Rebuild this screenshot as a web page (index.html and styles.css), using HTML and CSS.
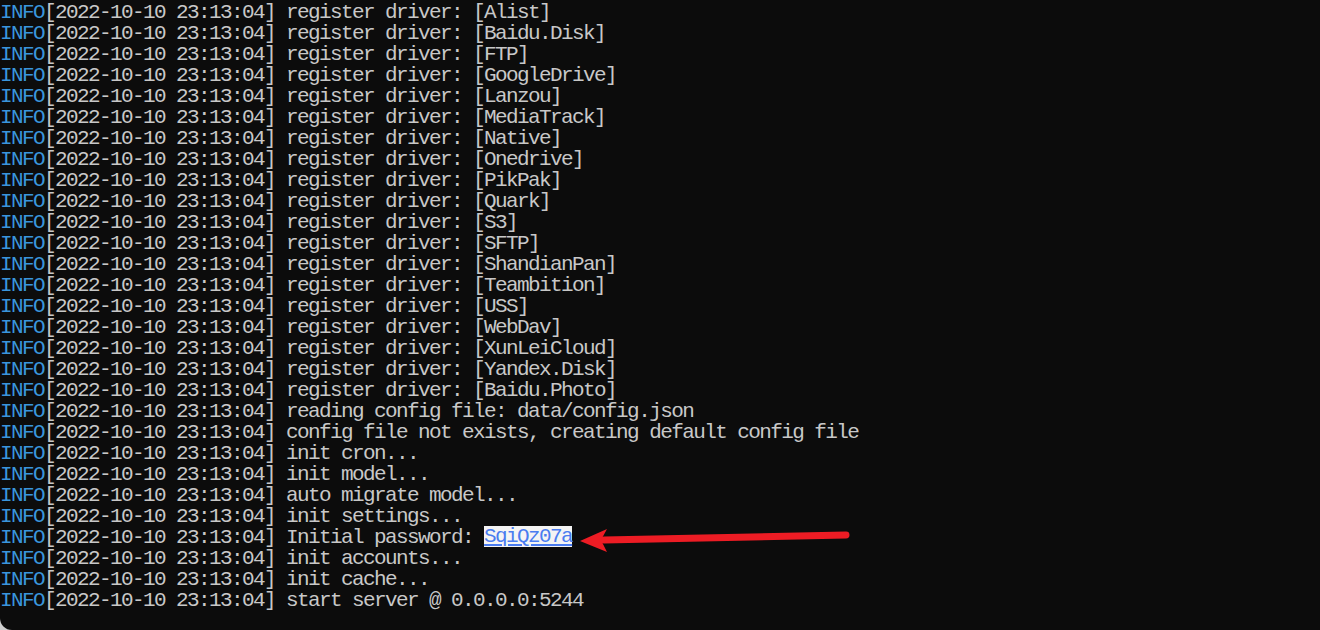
FILE: index.html
```html
<!DOCTYPE html>
<html>
<head>
<meta charset="utf-8">
<link rel="stylesheet" href="styles.css">
</head>
<body>
<div class="term">
<div class="line"><span class="lvl">INFO</span>[2022-10-10 23:13:04] register driver: [Alist]</div>
<div class="line"><span class="lvl">INFO</span>[2022-10-10 23:13:04] register driver: [Baidu.Disk]</div>
<div class="line"><span class="lvl">INFO</span>[2022-10-10 23:13:04] register driver: [FTP]</div>
<div class="line"><span class="lvl">INFO</span>[2022-10-10 23:13:04] register driver: [GoogleDrive]</div>
<div class="line"><span class="lvl">INFO</span>[2022-10-10 23:13:04] register driver: [Lanzou]</div>
<div class="line"><span class="lvl">INFO</span>[2022-10-10 23:13:04] register driver: [MediaTrack]</div>
<div class="line"><span class="lvl">INFO</span>[2022-10-10 23:13:04] register driver: [Native]</div>
<div class="line"><span class="lvl">INFO</span>[2022-10-10 23:13:04] register driver: [Onedrive]</div>
<div class="line"><span class="lvl">INFO</span>[2022-10-10 23:13:04] register driver: [PikPak]</div>
<div class="line"><span class="lvl">INFO</span>[2022-10-10 23:13:04] register driver: [Quark]</div>
<div class="line"><span class="lvl">INFO</span>[2022-10-10 23:13:04] register driver: [S3]</div>
<div class="line"><span class="lvl">INFO</span>[2022-10-10 23:13:04] register driver: [SFTP]</div>
<div class="line"><span class="lvl">INFO</span>[2022-10-10 23:13:04] register driver: [ShandianPan]</div>
<div class="line"><span class="lvl">INFO</span>[2022-10-10 23:13:04] register driver: [Teambition]</div>
<div class="line"><span class="lvl">INFO</span>[2022-10-10 23:13:04] register driver: [USS]</div>
<div class="line"><span class="lvl">INFO</span>[2022-10-10 23:13:04] register driver: [WebDav]</div>
<div class="line"><span class="lvl">INFO</span>[2022-10-10 23:13:04] register driver: [XunLeiCloud]</div>
<div class="line"><span class="lvl">INFO</span>[2022-10-10 23:13:04] register driver: [Yandex.Disk]</div>
<div class="line"><span class="lvl">INFO</span>[2022-10-10 23:13:04] register driver: [Baidu.Photo]</div>
<div class="line"><span class="lvl">INFO</span>[2022-10-10 23:13:04] reading config file: data/config.json</div>
<div class="line"><span class="lvl">INFO</span>[2022-10-10 23:13:04] config file not exists, creating default config file</div>
<div class="line"><span class="lvl">INFO</span>[2022-10-10 23:13:04] init cron...</div>
<div class="line"><span class="lvl">INFO</span>[2022-10-10 23:13:04] init model...</div>
<div class="line"><span class="lvl">INFO</span>[2022-10-10 23:13:04] auto migrate model...</div>
<div class="line"><span class="lvl">INFO</span>[2022-10-10 23:13:04] init settings...</div>
<div class="line"><span class="lvl">INFO</span>[2022-10-10 23:13:04] Initial password: <span class="sel">SqiQz07a</span></div>
<div class="line"><span class="lvl">INFO</span>[2022-10-10 23:13:04] init accounts...</div>
<div class="line"><span class="lvl">INFO</span>[2022-10-10 23:13:04] init cache...</div>
<div class="line"><span class="lvl">INFO</span>[2022-10-10 23:13:04] start server @ 0.0.0.0:5244</div>
<svg class="arrow" width="1320" height="630" viewBox="0 0 1320 630">
  <line x1="604" y1="540" x2="846" y2="535" stroke="#ed1c24" stroke-width="7" stroke-linecap="round"/>
  <polygon points="580,541 607,529 601,540 607,552" fill="#ed1c24"/>
</svg>
</div>
</body>
</html>
```
FILE: styles.css
```css
html, body {
  margin: 0;
  padding: 0;
}
body {
  background: #cfcfcf;
  width: 1320px;
  height: 630px;
  overflow: hidden;
}
.term {
  position: relative;
  box-sizing: border-box;
  width: 1320px;
  height: 630px;
  background: #0c0c0c;
  border-bottom-left-radius: 12px;
  padding-top: 1px;
  color: #c8c8c8;
  font-family: "Liberation Mono", monospace;
  font-size: 21px;
  letter-spacing: -1.6px;
  line-height: 21px;
}
.line {
  height: 21px;
  padding-top: 1px;
  box-sizing: border-box;
  white-space: pre;
}
.lvl {
  color: #3a96dd;
}
.sel {
  display: inline-block;
  height: 21px;
  margin-top: -1px;
  vertical-align: top;
  background: #f4f4f4;
  color: #4a7cf0;
  text-decoration: underline;
  text-decoration-color: #4a7cf0;
}
.arrow {
  position: absolute;
  left: 0;
  top: 0;
  pointer-events: none;
}
```
